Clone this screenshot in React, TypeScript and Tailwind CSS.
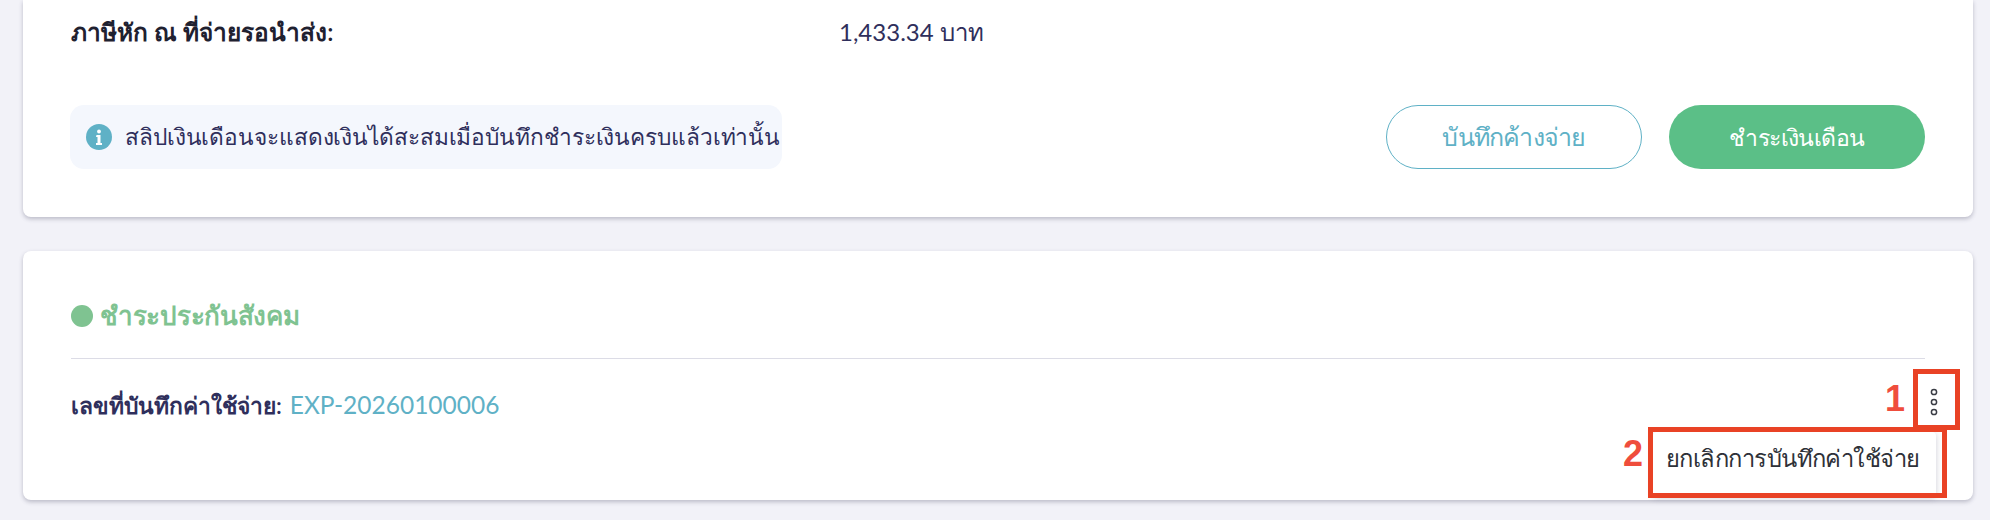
import { useState } from 'react';

function InfoIcon() {
  return (
    <svg width="26" height="26" viewBox="0 0 26 26" className="shrink-0">
      <circle cx="13" cy="13" r="13" fill="#5fb1c6" />
      <circle cx="13" cy="7.5" r="1.9" fill="#fff" />
      <path d="M10.5 11h4v8h1.5v2h-6v-2h1.5v-6h-1.5z" fill="#fff" />
    </svg>
  );
}

function Kebab() {
  return (
    <svg width="10" height="30" viewBox="0 0 10 30" fill="none" stroke="#3a3d45" strokeWidth="1.5">
      <circle cx="5" cy="5" r="2.6" />
      <circle cx="5" cy="15" r="2.6" />
      <circle cx="5" cy="25" r="2.6" />
    </svg>
  );
}

export default function App() {
  const [menuOpen] = useState(true);

  return (
    <div className="h-[520px] w-[1990px] overflow-hidden bg-[#f2f2f8] px-[23px] font-['Lato','Noto_Sans',sans-serif] text-[#2f2f5c]">
      {/* Payment summary card */}
      <div className="h-[217px] w-[1950px] rounded-b-[8px] bg-white px-[47px] shadow-[0_2px_4px_rgba(60,60,90,0.3)]">
        <div className="flex h-[64px] items-center">
          <span className="w-[769px] pl-[1px] text-[24.4px] font-semibold whitespace-nowrap text-[#1f2130]">ภาษีหัก ณ ที่จ่ายรอนำส่ง:</span>
          <span className="text-[24px] whitespace-nowrap">1,433.34 บาท</span>
        </div>
        <div className="mt-[41px] flex items-center justify-between">
          <div className="flex h-[64px] w-[712px] items-center gap-[13px] rounded-[14px] bg-[#f4f7fd] pl-[16px]">
            <InfoIcon />
            <span className="text-[22.7px] tracking-[-0.1px] whitespace-nowrap">สลิปเงินเดือนจะแสดงเงินได้สะสมเมื่อบันทึกชำระเงินครบแล้วเท่านั้น</span>
          </div>
          <div className="flex gap-[27px] pr-[1px]">
            <button className="h-[64px] w-[256px] rounded-full border border-[#5fb1c6] bg-white text-[25px] tracking-[-0.8px] text-[#5fb1c6]">
              บันทึกค้างจ่าย
            </button>
            <button className="h-[64px] w-[256px] rounded-full bg-[#5bbf87] text-[23px] tracking-[-0.6px] text-white">
              ชำระเงินเดือน
            </button>
          </div>
        </div>
      </div>

      {/* Social security card */}
      <div className="relative mt-[34px] h-[249px] w-[1950px] rounded-[8px] bg-white px-[48px] shadow-[0_2px_4px_rgba(60,60,90,0.3)]">
        <div className="flex h-[108px] items-center gap-[7px] border-b border-[#dcdce6] pt-[22px]">
          <span className="h-[22px] w-[22px] rounded-full bg-[#7fc391]" />
          <span className="text-[26px] font-semibold tracking-[-0.3px] text-[#7fc391]">ชำระประกันสังคม</span>
        </div>
        <div className="flex items-center gap-[8px] pt-[28px]">
          <span className="text-[22.8px] font-semibold">เลขที่บันทึกค่าใช้จ่าย:</span>
          <span className="text-[24.5px] text-[#5fb1c6]">EXP-20260100006</span>
        </div>

        <div className="absolute left-[1906px] top-[136px]">
          <Kebab />
        </div>

        {menuOpen && (
          <div className="absolute left-[1630px] top-[181px] flex h-[65px] w-[283px] items-center rounded-[4px] bg-white pb-[12px] pl-[13px] text-[23.7px] tracking-[-0.55px] text-[#2e3138] shadow-[0_1px_6px_rgba(60,60,90,0.25)]">
            ยกเลิกการบันทึกค่าใช้จ่าย
          </div>
        )}

        {/* Red annotations */}
        <div className="absolute left-[1890px] top-[118px] h-[61px] w-[47px] border-[5px] border-[#e94225]" />
        <div className="absolute left-[1625px] top-[176px] h-[71px] w-[299px] border-[5px] border-[#e94225]" />
        <span className="absolute left-[1862px] top-[128px] font-['Liberation_Sans',sans-serif] text-[36px] leading-[40px] font-bold text-[#ef4d3c]">1</span>
        <span className="absolute left-[1600px] top-[183px] font-['Liberation_Sans',sans-serif] text-[36px] leading-[40px] font-bold text-[#ef4d3c]">2</span>
      </div>
    </div>
  );
}
